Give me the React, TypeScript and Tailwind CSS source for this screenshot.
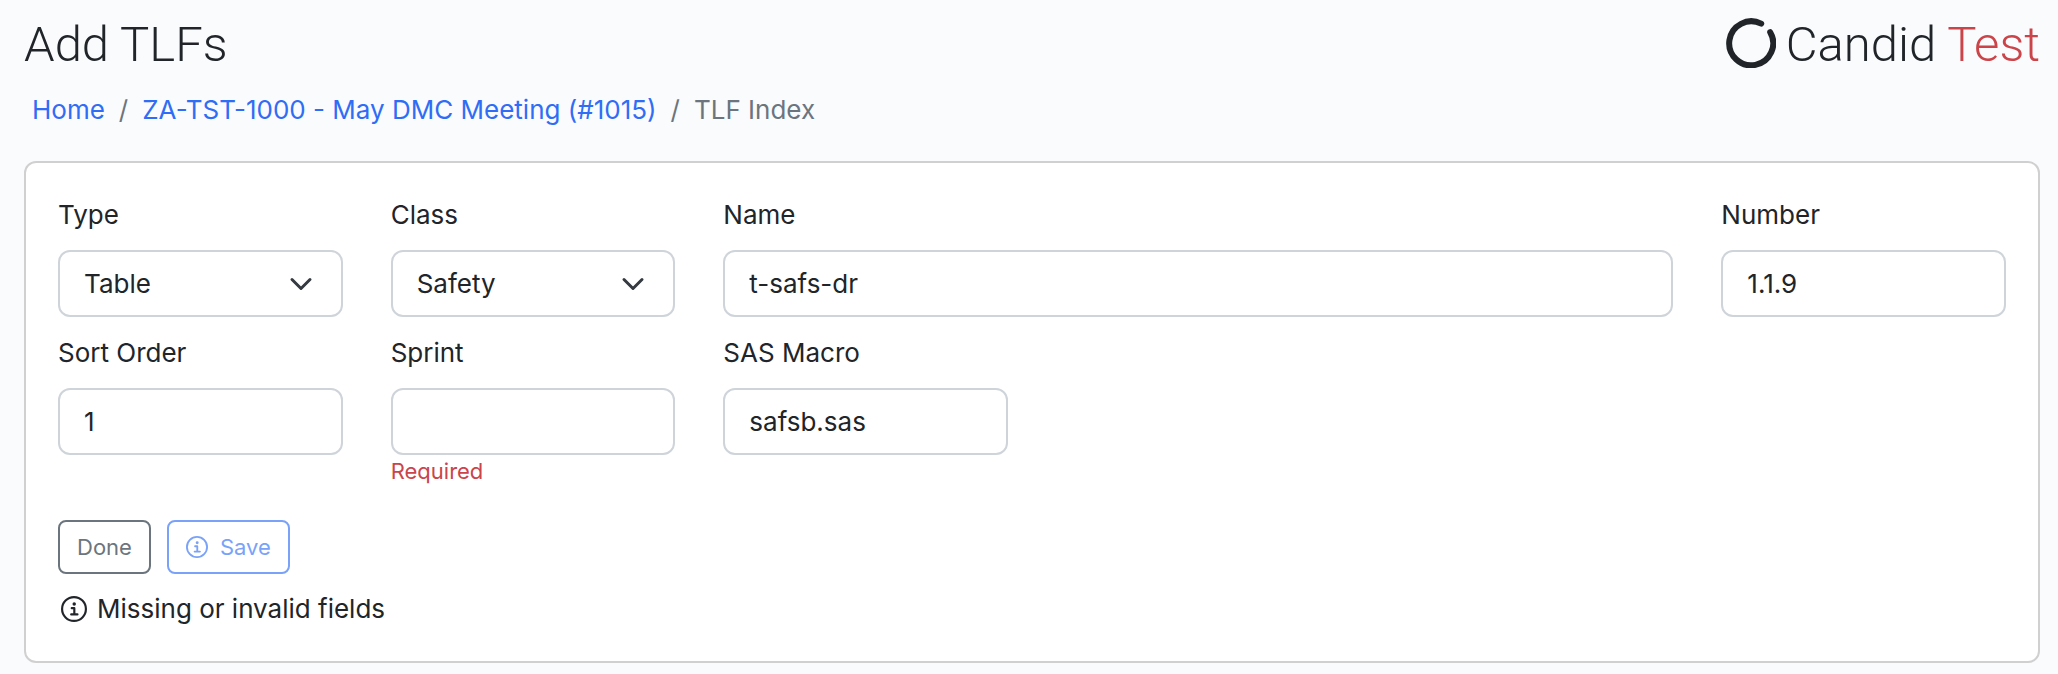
import { ReactNode, useState } from 'react';

const inputStyles =
  'block h-[67px] w-full rounded-xl border-2 border-[#ced4da] bg-white px-6 text-[26px] text-[#212529] outline-none focus:border-[#86b7fe]';

const displayStyles = "font-['Roboto',sans-serif] text-[49px] leading-[58px] font-[350]";

function InfoIcon({ className }: { className?: string }) {
  return (
    <svg viewBox="0 0 24 24" fill="none" stroke="currentColor" className={className} aria-hidden="true">
      <circle cx="12" cy="12" r="11" strokeWidth="2" />
      <circle cx="12.2" cy="7.4" r="1.6" fill="currentColor" stroke="none" />
      <path d="M9.9 11.2h2.4v5.6M9.4 17h5.8" strokeWidth="2" strokeLinecap="round" strokeLinejoin="round" />
    </svg>
  );
}

function Logo() {
  return (
    <div className={`flex items-start gap-2.5 ${displayStyles}`}>
      <svg viewBox="0 0 50 50" fill="none" stroke="currentColor" className="mt-0.5 size-[50px]" aria-hidden="true">
        <path d="M35.2 5.7A22 22 0 1 0 44.2 14.2" strokeWidth="6" strokeLinecap="round" />
      </svg>
      <span>
        Candid <span className="text-[#cb444a]">Test</span>
      </span>
    </div>
  );
}

interface FieldProps {
  id: string;
  label: string;
  className?: string;
  error?: string;
  children: ReactNode;
}

function Field({ id, label, className = '', error, children }: FieldProps) {
  return (
    <div className={className}>
      <label htmlFor={id} className="mb-[15px] block leading-10">
        {label}
      </label>
      {children}
      {error && <p className="text-[22px] leading-8 text-[#cb444a]">{error}</p>}
    </div>
  );
}

interface TextFieldProps {
  id: string;
  label: string;
  initial?: string;
  className?: string;
  required?: boolean;
}

function TextField({ id, label, initial = '', className, required }: TextFieldProps) {
  const [value, setValue] = useState(initial);

  return (
    <Field id={id} label={label} className={className} error={required && !value ? 'Required' : undefined}>
      <input id={id} type="text" value={value} onChange={(e) => setValue(e.target.value)} className={inputStyles} />
    </Field>
  );
}

function SelectField({ id, label, options }: { id: string; label: string; options: string[] }) {
  return (
    <Field id={id} label={label}>
      <div className="relative">
        <select id={id} defaultValue={options[0]} className={`${inputStyles} appearance-none`}>
          {options.map((option) => (
            <option key={option}>{option}</option>
          ))}
        </select>
        <svg
          viewBox="0 0 16 16"
          fill="none"
          stroke="#343a40"
          className="pointer-events-none absolute inset-y-0 right-[30px] my-auto size-6"
          aria-hidden="true"
        >
          <path d="m2 5 6 6 6-6" strokeWidth="2" strokeLinecap="round" strokeLinejoin="round" />
        </svg>
      </div>
    </Field>
  );
}

export default function App() {
  return (
    <div className="min-h-screen bg-[#fafbfd] pt-4 pr-[18px] pb-3 pl-6 font-['Inter',sans-serif] text-[26px] text-[#212529]">
      {/* Header */}
      <header className="flex items-center justify-between">
        <h1 className={displayStyles}>Add TLFs</h1>
        <Logo />
      </header>

      <nav aria-label="Breadcrumb" className="mt-4 pl-2">
        <ol className="flex gap-3.5 leading-10 text-[#6c757d]">
          <li>
            <a href="#home" className="text-[#2f6df6]">Home</a>
          </li>
          <li aria-hidden="true">/</li>
          <li>
            <a href="#meeting" className="text-[#2f6df6]">ZA-TST-1000 - May DMC Meeting (#1015)</a>
          </li>
          <li aria-hidden="true">/</li>
          <li aria-current="page">TLF Index</li>
        </ol>
      </nav>

      {/* Form */}
      <form
        onSubmit={(e) => e.preventDefault()}
        className="mt-[31px] rounded-xl border-2 border-[#d0d0d0] bg-white p-8"
      >
        <div className="grid grid-cols-6 gap-x-12 gap-y-4">
          <SelectField id="type" label="Type" options={['Table', 'Listing', 'Figure']} />
          <SelectField id="class" label="Class" options={['Safety', 'Efficacy']} />
          <TextField id="name" label="Name" initial="t-safs-dr" className="col-span-3" />
          <TextField id="number" label="Number" initial="1.1.9" />
          <TextField id="sort-order" label="Sort Order" initial="1" />
          <TextField id="sprint" label="Sprint" required />
          <TextField id="sas-macro" label="SAS Macro" initial="safsb.sas" />
        </div>

        <div className="mt-[33px] flex gap-4 text-[22px]">
          <button type="button" className="h-[54px] rounded-lg border-2 border-[#6c757d] px-[17px] text-[#6c757d]">
            Done
          </button>
          <button
            type="submit"
            disabled
            className="flex h-[54px] items-center gap-3 rounded-lg border-2 border-[#7aa2f9] px-[17px] text-[#7aa2f9]"
          >
            <InfoIcon className="size-[22px]" />
            Save
          </button>
        </div>

        <p className="mt-[15px] flex items-center gap-2.5 pl-[3px] leading-10">
          <InfoIcon className="size-[26px]" />
          Missing or invalid fields
        </p>
      </form>
    </div>
  );
}
